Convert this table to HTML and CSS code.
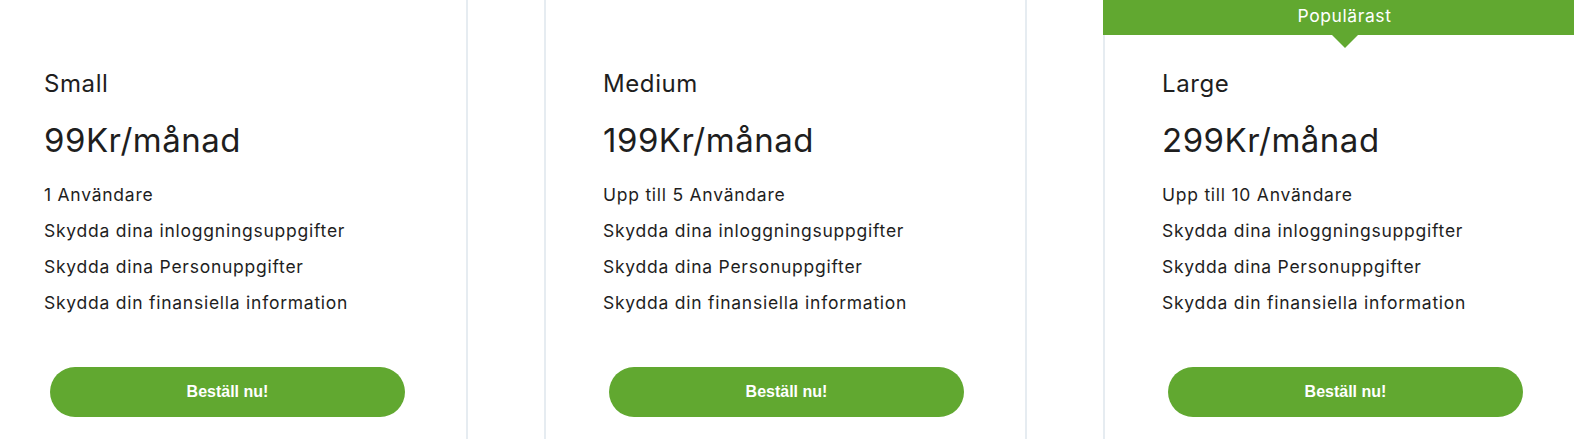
FILE: index.html
```
<!DOCTYPE html>
<html lang="sv">
<head>
<meta charset="utf-8">
<title>Priser</title>
<link rel="stylesheet" href="styles.css">
</head>
<body>
<div class="viewport">
  <div class="plans">
    <div class="plan">
      <h3 class="plan-name">Small</h3>
      <div class="plan-price">99Kr/månad</div>
      <ul class="features">
        <li>1 Användare</li>
        <li>Skydda dina inloggningsuppgifter</li>
        <li>Skydda dina Personuppgifter</li>
        <li>Skydda din finansiella information</li>
      </ul>
      <a class="order-btn" href="#">Beställ nu!</a>
    </div>
    <div class="plan">
      <h3 class="plan-name">Medium</h3>
      <div class="plan-price">199Kr/månad</div>
      <ul class="features">
        <li>Upp till 5 Användare</li>
        <li>Skydda dina inloggningsuppgifter</li>
        <li>Skydda dina Personuppgifter</li>
        <li>Skydda din finansiella information</li>
      </ul>
      <a class="order-btn" href="#">Beställ nu!</a>
    </div>
    <div class="plan plan-popular">
      <div class="popular-badge">Populärast</div>
      <h3 class="plan-name">Large</h3>
      <div class="plan-price">299Kr/månad</div>
      <ul class="features">
        <li>Upp till 10 Användare</li>
        <li>Skydda dina inloggningsuppgifter</li>
        <li>Skydda dina Personuppgifter</li>
        <li>Skydda din finansiella information</li>
      </ul>
      <a class="order-btn" href="#">Beställ nu!</a>
    </div>
  </div>
</div>
</body>
</html>
```
FILE: styles.css
```
html, body {
  margin: 0;
  padding: 0;
  background: #ffffff;
}

.viewport {
  width: 100%;
  height: 439px;
  overflow: hidden;
}

.plans {
  display: flex;
  gap: 76px;
  margin-left: -15px;
  font-family: "Inter", "Open Sans", sans-serif;
  color: #1e1e1e;
}

.plan {
  position: relative;
  flex: 0 0 483px;
  box-sizing: border-box;
  height: 439px;
  border-left: 2px solid #e6ecf1;
  border-right: 2px solid #e6ecf1;
  padding: 68px 0 0 57px;
  display: flex;
  flex-direction: column;
}

.plan-name {
  margin: 0;
  font-size: 24px;
  font-weight: 400;
  line-height: 32px;
  letter-spacing: 0.6px;
}

.plan-price {
  margin-top: 20px;
  font-size: 33px;
  line-height: 40px;
  font-weight: 400;
  letter-spacing: 0.5px;
}

.features {
  list-style: none;
  margin: 17px 0 0;
  padding: 0;
  font-size: 17.5px;
  line-height: 36px;
  letter-spacing: 0.75px;
}

.order-btn {
  margin: 46px 0 0 6px;
  width: 355px;
  height: 50px;
  border-radius: 25px;
  background: #61a830;
  color: #ffffff;
  display: flex;
  align-items: center;
  justify-content: center;
  text-decoration: none;
  font-family: "Liberation Sans", Arial, sans-serif;
  font-weight: 700;
  font-size: 16px;
}

.popular-badge {
  position: absolute;
  top: 0;
  left: -2px;
  right: -2px;
  height: 35px;
  background: #61a830;
  color: #ffffff;
  font-size: 17.5px;
  line-height: 31px;
  letter-spacing: 0.6px;
  text-align: center;
}

.popular-badge::after {
  content: "";
  position: absolute;
  left: 50%;
  bottom: -13px;
  margin-left: -13px;
  border-left: 13px solid transparent;
  border-right: 13px solid transparent;
  border-top: 13px solid #61a830;
}
```
